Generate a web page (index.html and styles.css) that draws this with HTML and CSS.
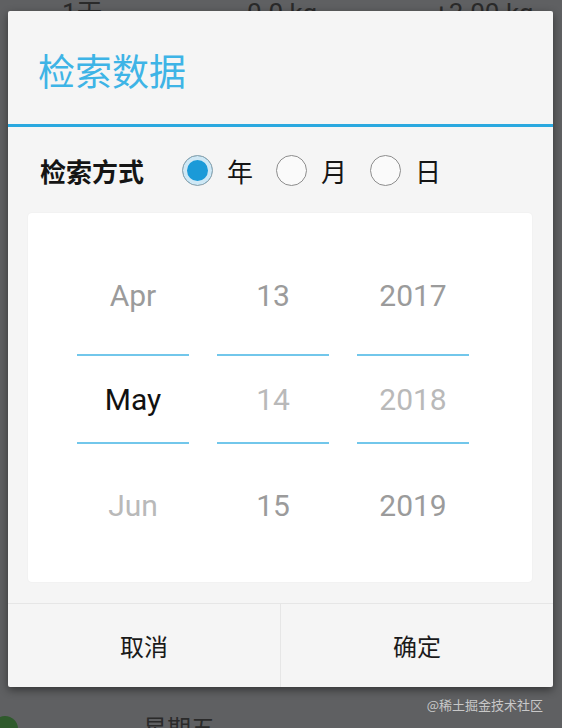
FILE: index.html
```html
<!DOCTYPE html>
<html lang="zh-CN">
<head>
    <meta charset="UTF-8">
    <meta name="viewport" content="width=device-width, initial-scale=1.0">
    <title>检索数据</title>
    <link rel="stylesheet" href="styles.css">
</head>
<body>
    <div class="screen">
        <!-- list behind the dialog -->
        <div class="record-list">
            <div class="record-row record-top">
                <span class="cell cell-day">1天</span>
                <span class="cell cell-weight">0.0 kg</span>
                <span class="cell cell-diff">+3.00 kg</span>
            </div>
            <div class="record-row record-bottom">
                <span class="avatar"></span>
                <span class="cell cell-week">星期五</span>
            </div>
        </div>

        <div class="watermark">@稀土掘金技术社区</div>

        <div class="dialog">
            <div class="dialog-header">
                <h1 class="dialog-title">检索数据</h1>
            </div>

            <div class="mode-row">
                <span class="mode-label">检索方式</span>
                <label class="radio-item">
                    <span class="radio checked"></span>
                    <span class="radio-text">年</span>
                </label>
                <label class="radio-item">
                    <span class="radio"></span>
                    <span class="radio-text">月</span>
                </label>
                <label class="radio-item">
                    <span class="radio"></span>
                    <span class="radio-text">日</span>
                </label>
            </div>

            <div class="picker-card">
                <div class="picker">
                    <div class="picker-col">
                        <div class="picker-item prev dim">Apr</div>
                        <div class="picker-item current">May</div>
                        <div class="picker-item next faint">Jun</div>
                    </div>
                    <div class="picker-col">
                        <div class="picker-item prev dim">13</div>
                        <div class="picker-item current faint">14</div>
                        <div class="picker-item next dim">15</div>
                    </div>
                    <div class="picker-col">
                        <div class="picker-item prev dim">2017</div>
                        <div class="picker-item current faint">2018</div>
                        <div class="picker-item next dim">2019</div>
                    </div>
                </div>
            </div>

            <div class="dialog-actions">
                <button class="action-btn">取消</button>
                <button class="action-btn">确定</button>
            </div>
        </div>
    </div>
</body>
</html>
```

FILE: styles.css
```css
* {
    margin: 0;
    padding: 0;
    box-sizing: border-box;
}

body {
    font-family: Roboto, "Noto Sans CJK SC", sans-serif;
    background: #5f6062;
}

.screen {
    position: relative;
    width: 562px;
    height: 728px;
    overflow: hidden;
    background: #5f6062;
}

/* background list */
.record-list {
    height: 728px;
    display: flex;
    flex-direction: column;
    justify-content: space-between;
    color: #2a2a2a;
}

.record-row {
    display: flex;
    align-items: center;
    font-size: 26px;
    line-height: 30px;
}

.record-top {
    margin-top: -2px;
}

.cell-day {
    margin-left: 62px;
    width: 185px;
}

.cell-weight {
    width: 187px;
}

.record-bottom {
    font-size: 24px;
    margin-bottom: -16px;
}

.avatar {
    width: 26px;
    height: 26px;
    margin-left: -8px;
    border-radius: 50%;
    background: #2f5a2c;
}

.cell-week {
    margin-left: 125px;
}

.watermark {
    position: absolute;
    right: 19px;
    top: 695px;
    font-family: "Noto Sans CJK SC", sans-serif;
    font-size: 13px;
    color: rgba(235, 235, 235, 0.75);
}

/* dialog */
.dialog {
    position: absolute;
    top: 11px;
    left: 8px;
    width: 545px;
    background: #f5f5f5;
    border-radius: 2px;
    box-shadow: 0 3px 8px rgba(0, 0, 0, 0.45);
}

.dialog-header {
    height: 116px;
    padding: 4px 0 0 30px;
    display: flex;
    align-items: center;
    border-bottom: 3px solid #2aa8df;
}

.dialog-title {
    font-family: "Noto Sans CJK SC", sans-serif;
    font-size: 37px;
    font-weight: 400;
    color: #3eb4e6;
}

.mode-row {
    height: 86px;
    padding-left: 32px;
    display: flex;
    align-items: center;
    font-family: "Noto Sans CJK SC", sans-serif;
    color: #151515;
}

.mode-label {
    font-size: 26px;
    font-weight: 700;
    margin-right: 38px;
}

.radio-item {
    display: flex;
    align-items: center;
    margin-right: 23px;
}

.radio {
    width: 31px;
    height: 31px;
    border-radius: 50%;
    border: 1.5px solid #8d8d8d;
    background: #fafafa;
    margin-right: 14px;
}

.radio.checked {
    border-color: #9aa6ac;
    background: #1b9ad8;
    box-shadow: inset 0 0 0 4px #cfe8f5;
}

.radio-text {
    font-size: 26px;
}

/* wheel picker */
.picker-card {
    margin: 0 21px 21px 20px;
    height: 369px;
    background: #ffffff;
    border-radius: 4px;
    box-shadow: 0 0 2px rgba(0, 0, 0, 0.06);
    padding: 23px 0 0 49px;
}

.picker {
    display: flex;
    gap: 28px;
}

.picker-col {
    width: 112px;
    display: flex;
    flex-direction: column;
}

.picker-item {
    display: flex;
    align-items: center;
    justify-content: center;
    font-size: 30px;
    color: #111;
}

.picker-item.prev {
    height: 118px;
}

.picker-item.current {
    height: 90px;
    border-top: 2px solid #72c7eb;
    border-bottom: 2px solid #72c7eb;
}

.picker-item.next {
    height: 122px;
}

.picker-item.dim {
    color: #9b9b9b;
}

.picker-item.faint {
    color: #b9b9b9;
}

/* buttons */
.dialog-actions {
    display: flex;
    border-top: 1px solid #e6e6e6;
}

.action-btn {
    flex: 1;
    height: 83px;
    border: none;
    background: transparent;
    font-family: "Noto Sans CJK SC", sans-serif;
    font-size: 24px;
    color: #1a1a1a;
}

.action-btn + .action-btn {
    border-left: 1px solid #e6e6e6;
}
```
